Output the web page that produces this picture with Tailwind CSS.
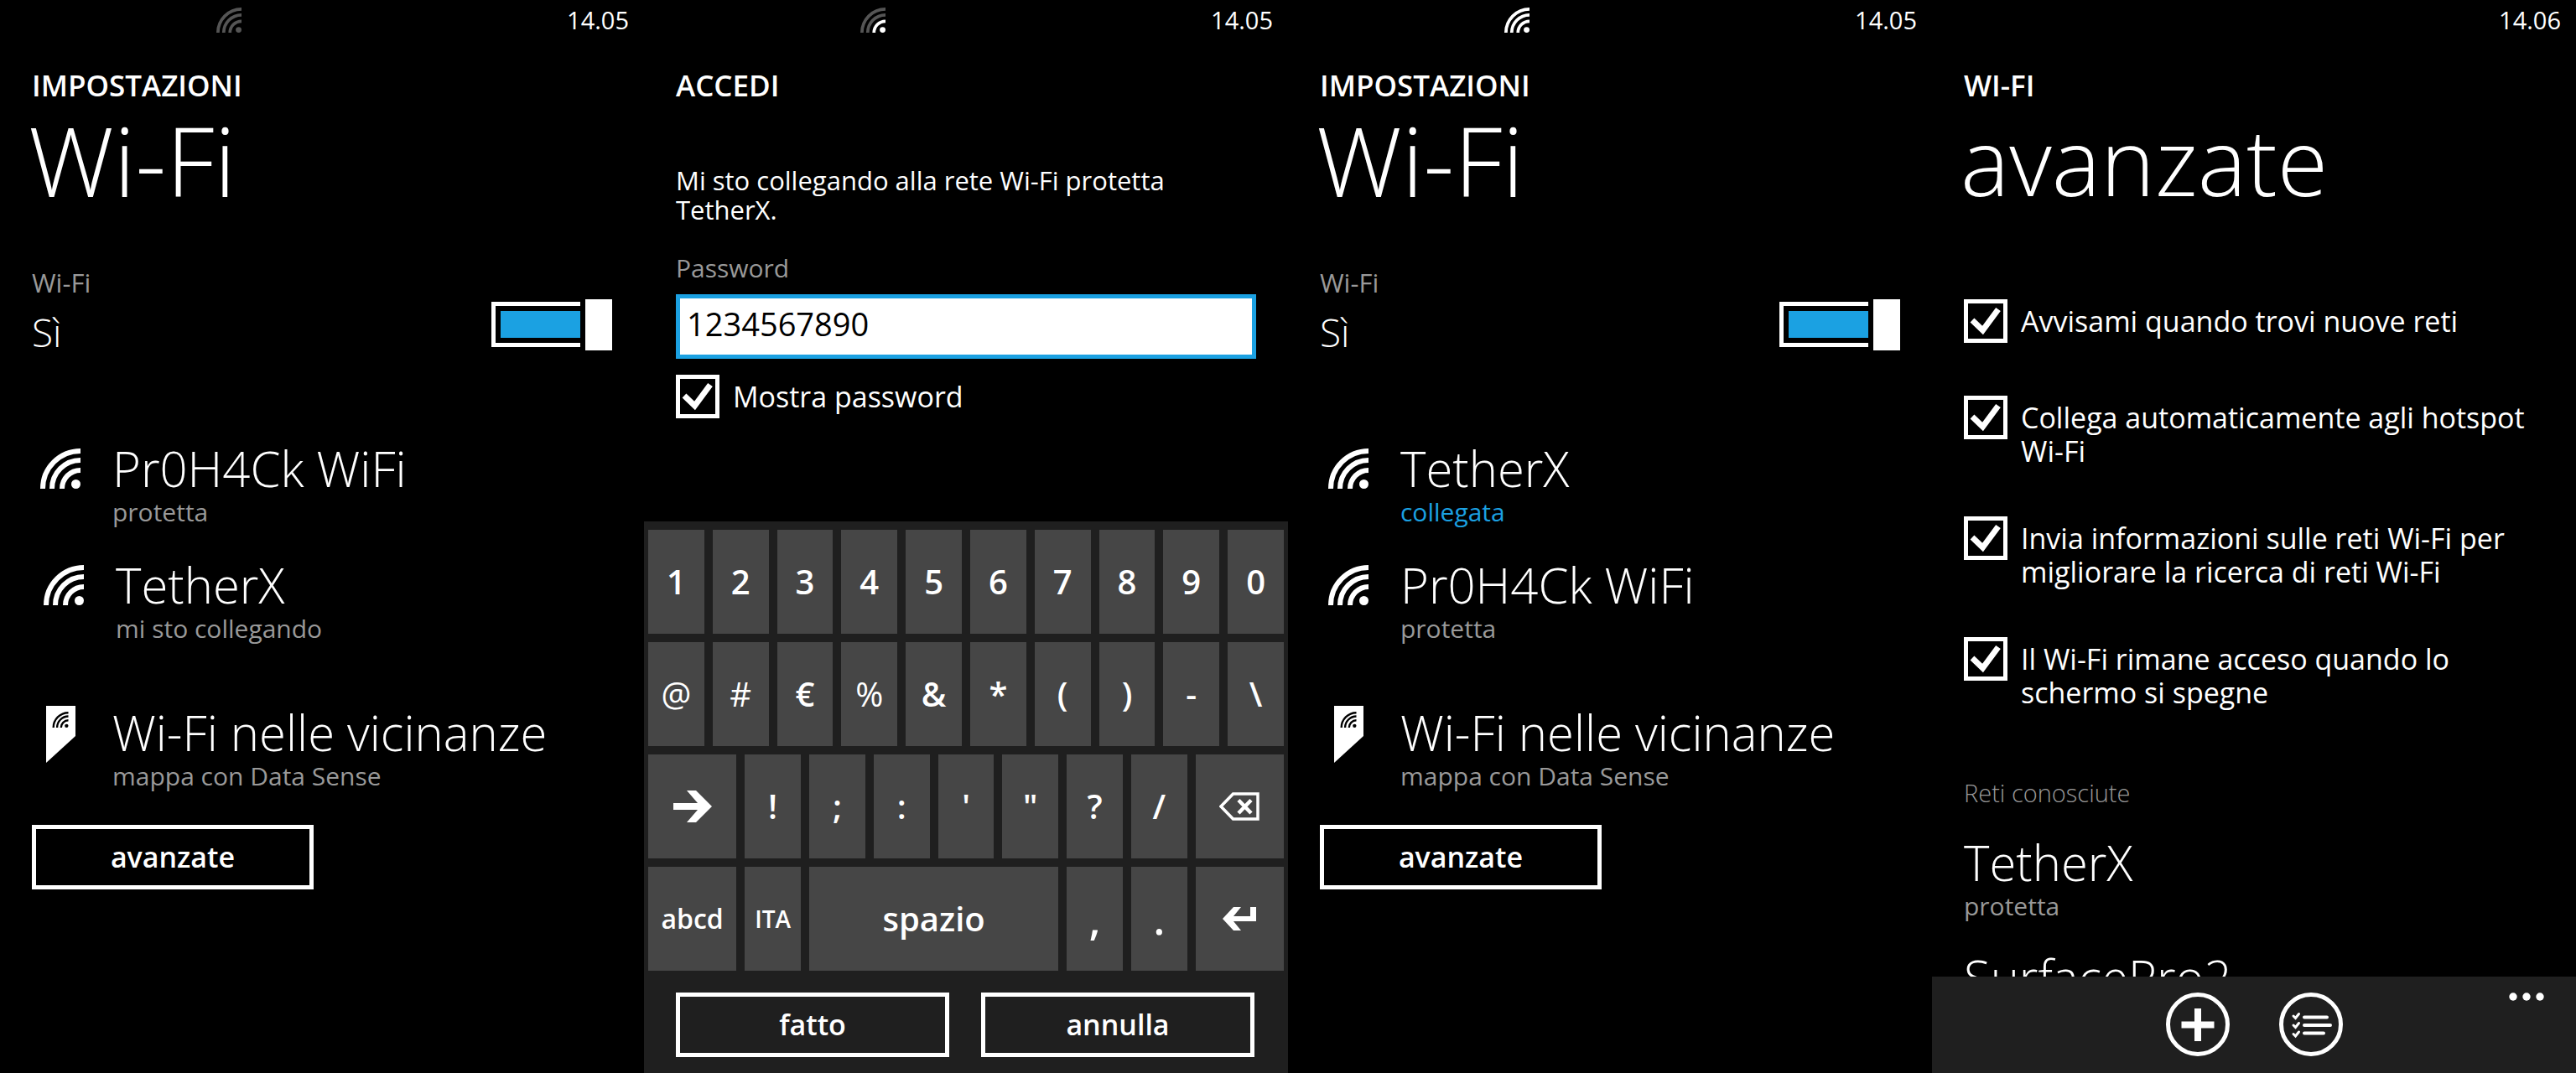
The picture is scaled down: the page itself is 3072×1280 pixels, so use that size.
<!DOCTYPE html>
<html lang="it">
<head>
  <meta charset="UTF-8">
  <meta name="viewport" content="width=device-width, initial-scale=1.0">
  <title>Impostazioni Wi-Fi</title>
  <script src="https://cdn.jsdelivr.net/npm/@tailwindcss/browser@4"></script>
</head>
<body class="bg-black text-white font-['Open_Sans','Noto_Sans',sans-serif]">
  <!-- Shared icons -->
  <svg class="hidden" aria-hidden="true">
    <symbol id="wifi" viewBox="0 0 48 48">
      <g fill="none" stroke="currentColor" stroke-width="6">
        <path d="M3 48A45 45 0 0 1 48 3" />
        <path d="M14 48A34 34 0 0 1 48 14" />
        <path d="M26 48A22 22 0 0 1 48 26" />
      </g>
      <circle cx="42.5" cy="42.5" r="5.5" fill="currentColor" />
    </symbol>
    <symbol id="pin" viewBox="0 0 35 68">
      <path d="M0 0H35V36L0 68Z" fill="#fff" />
      <use href="#wifi" x="7" y="7" width="20" height="19" color="#000" />
    </symbol>
    <symbol id="check" viewBox="0 0 52 52">
      <path d="M10 25L22.500 37L41 12" fill="none" stroke="#fff" stroke-width="7" />
    </symbol>
    <symbol id="switch" viewBox="0 0 144 61">
      <path d="M106 5.500H2.500V54.500H106" fill="none" stroke="#fff" stroke-width="5" />
      <path d="M11 14H106V46H11Z" fill="#1ba1e2" />
      <path d="M112 0H144V61H112Z" fill="#fff" />
    </symbol>
  </svg>

  <main class="grid grid-cols-4">
    <!-- Wi-Fi: connecting -->
    <section class="flex h-screen flex-col overflow-hidden">
      <div class="grid h-12 shrink-0 grid-cols-3 items-center pr-[18px] text-[29px]">
        <svg class="col-start-2 ml-2 size-[30px] text-[#555]"><use href="#wifi" /></svg>
        <time class="text-right">14.05</time>
      </div>
      <div class="px-[38px]">
        <h2 class="mt-[34px] text-[35px] leading-[40px] font-semibold">IMPOSTAZIONI</h2>
        <h1 class="mt-[9px] -ml-1 text-[114px] leading-[120px] font-light">Wi-Fi</h1>
        <label for="wifi-1" class="mt-[66px] block text-[31px] leading-[40px] text-[#999]">Wi-Fi</label>
        <div class="flex items-end justify-between">
          <span class="text-[46px] leading-[44px] font-light">Sì</span>
          <span class="grid">
            <input id="wifi-1" type="checkbox" role="switch" checked class="col-start-1 row-start-1 h-[61px] w-36 appearance-none">
            <svg class="pointer-events-none col-start-1 row-start-1 h-[61px] w-36"><use href="#switch" /></svg>
          </span>
        </div>
        <ul class="mt-[107px] flex flex-col gap-[35px]">
          <li class="flex">
            <div class="w-24 shrink-0 pt-[10px] pl-[10px]"><svg class="size-12"><use href="#wifi" /></svg></div>
            <div>
              <p class="text-[58px] leading-[68px] font-light">Pr0H4Ck WiFi</p>
              <p class="text-[30px] leading-[36px] text-[#999]">protetta</p>
            </div>
          </li>
          <li class="ml-1 flex">
            <div class="w-24 shrink-0 pt-[10px] pl-[10px]"><svg class="size-12"><use href="#wifi" /></svg></div>
            <div>
              <p class="text-[58px] leading-[68px] font-light">TetherX</p>
              <p class="text-[30px] leading-[36px] text-[#999]">mi sto collegando</p>
            </div>
          </li>
        </ul>
        <div class="mt-[72px] flex">
          <div class="w-24 shrink-0 pt-[2px] pl-[17px]"><svg class="h-[68px] w-[35px]"><use href="#pin" /></svg></div>
          <div>
            <p class="text-[58px] leading-[68px] font-light">Wi-Fi nelle vicinanze</p>
            <p class="text-[30px] leading-[36px] text-[#999]">mappa con Data Sense</p>
          </div>
        </div>
        <button class="mt-[40px] h-[77px] w-[336px] border-5 border-white text-[34px] font-semibold">avanzate</button>
      </div>
    </section>

    <!-- Password prompt with keyboard -->
    <section class="flex h-screen flex-col overflow-hidden">
      <div class="grid h-12 shrink-0 grid-cols-3 items-center pr-[18px] text-[29px]">
        <svg class="col-start-2 ml-2 size-[30px]" viewBox="0 0 48 48" fill="none" stroke="#555" stroke-width="6">
          <path d="M3 48A45 45 0 0 1 48 3" />
          <path d="M14 48A34 34 0 0 1 48 14" />
          <path d="M26 48A22 22 0 0 1 48 26" stroke="#fff" />
          <circle cx="42.5" cy="42.5" r="5.5" fill="#fff" stroke="none" />
        </svg>
        <time class="text-right">14.05</time>
      </div>
      <div class="px-[38px]">
        <h2 class="mt-[34px] text-[35px] leading-[40px] font-semibold">ACCEDI</h2>
        <p class="mt-[76px] pr-16 text-[31px] leading-[35px]">Mi sto collegando alla rete Wi-Fi protetta TetherX.</p>
        <label for="password" class="mt-[32px] block text-[30px] leading-[40px] text-[#999]">Password</label>
        <input id="password" type="text" value="1234567890" class="mt-[11px] block h-[77px] w-full border-5 border-[#1ba1e2] bg-white pb-2 pl-2 text-[38px] text-black">
        <div class="mt-[19px] flex items-center gap-4">
          <span class="grid shrink-0">
            <input id="show" type="checkbox" checked class="col-start-1 row-start-1 size-[52px] appearance-none border-5 border-white">
            <svg class="pointer-events-none col-start-1 row-start-1 size-[52px]"><use href="#check" /></svg>
          </span>
          <label for="show" class="text-[34px] leading-[40px]">Mostra password</label>
        </div>
      </div>
      <div class="mt-auto bg-[#1f1f1f] pt-[10px] pb-[19px]">
        <div class="grid auto-rows-[124px] grid-cols-20 gap-[10px] px-[5px] text-[40px] font-semibold">
          <button class="col-span-2 bg-[#464646]">1</button>
          <button class="col-span-2 bg-[#464646]">2</button>
          <button class="col-span-2 bg-[#464646]">3</button>
          <button class="col-span-2 bg-[#464646]">4</button>
          <button class="col-span-2 bg-[#464646]">5</button>
          <button class="col-span-2 bg-[#464646]">6</button>
          <button class="col-span-2 bg-[#464646]">7</button>
          <button class="col-span-2 bg-[#464646]">8</button>
          <button class="col-span-2 bg-[#464646]">9</button>
          <button class="col-span-2 bg-[#464646]">0</button>

          <button class="col-span-2 bg-[#464646] font-normal">@</button>
          <button class="col-span-2 bg-[#464646] font-normal">#</button>
          <button class="col-span-2 bg-[#464646]">€</button>
          <button class="col-span-2 bg-[#464646] font-normal">%</button>
          <button class="col-span-2 bg-[#464646]">&amp;</button>
          <button class="col-span-2 bg-[#464646]">*</button>
          <button class="col-span-2 bg-[#464646]">(</button>
          <button class="col-span-2 bg-[#464646]">)</button>
          <button class="col-span-2 bg-[#464646]">-</button>
          <button class="col-span-2 bg-[#464646]">\</button>

          <button class="col-span-3 flex items-center justify-center bg-[#464646]" aria-label="altri simboli">
            <svg class="h-[38px] w-[46px]" viewBox="0 0 46 38" fill="#fff"><path d="M0 15H29L16 0H27L46 19L27 38H16L29 23H0Z" /></svg>
          </button>
          <button class="col-span-2 bg-[#464646]">!</button>
          <button class="col-span-2 bg-[#464646]">;</button>
          <button class="col-span-2 bg-[#464646]">:</button>
          <button class="col-span-2 bg-[#464646]">'</button>
          <button class="col-span-2 bg-[#464646]">"</button>
          <button class="col-span-2 bg-[#464646]">?</button>
          <button class="col-span-2 bg-[#464646]">/</button>
          <button class="col-span-3 flex items-center justify-center bg-[#464646]" aria-label="cancella">
            <svg class="h-[34px] w-[48px]" viewBox="0 0 48 34" fill="none" stroke="#fff">
              <path d="M2 17L16.500 2H46V32H16.500Z" stroke-width="3.500" />
              <path d="M23 9.500L38 25M38 9.500L23 25" stroke-width="4.500" />
            </svg>
          </button>

          <button class="col-span-3 bg-[#464646] text-[32px]">abcd</button>
          <button class="col-span-2 bg-[#464646] text-[28px]">ITA</button>
          <button class="col-span-8 bg-[#464646]">spazio</button>
          <button class="col-span-2 bg-[#464646] text-[50px]">,</button>
          <button class="col-span-2 bg-[#464646] text-[50px]">.</button>
          <button class="col-span-3 flex items-center justify-center bg-[#464646]" aria-label="invio">
            <svg class="h-[28px] w-[40px]" viewBox="0 0 40 28" fill="#fff"><path d="M0 14L13 0H22L13 11H33V0H40V17H13L22 28H13Z" /></svg>
          </button>
        </div>
        <div class="mt-[26px] grid grid-cols-2 gap-[38px] pr-[40px] pl-[38px] text-[34px] font-semibold">
          <button class="h-[77px] border-5 border-white">fatto</button>
          <button class="h-[77px] border-5 border-white">annulla</button>
        </div>
      </div>
    </section>

    <!-- Wi-Fi: connected -->
    <section class="flex h-screen flex-col overflow-hidden">
      <div class="grid h-12 shrink-0 grid-cols-3 items-center pr-[18px] text-[29px]">
        <svg class="col-start-2 ml-2 size-[30px]"><use href="#wifi" /></svg>
        <time class="text-right">14.05</time>
      </div>
      <div class="px-[38px]">
        <h2 class="mt-[34px] text-[35px] leading-[40px] font-semibold">IMPOSTAZIONI</h2>
        <h1 class="mt-[9px] -ml-1 text-[114px] leading-[120px] font-light">Wi-Fi</h1>
        <label for="wifi-2" class="mt-[66px] block text-[31px] leading-[40px] text-[#999]">Wi-Fi</label>
        <div class="flex items-end justify-between">
          <span class="text-[46px] leading-[44px] font-light">Sì</span>
          <span class="grid">
            <input id="wifi-2" type="checkbox" role="switch" checked class="col-start-1 row-start-1 h-[61px] w-36 appearance-none">
            <svg class="pointer-events-none col-start-1 row-start-1 h-[61px] w-36"><use href="#switch" /></svg>
          </span>
        </div>
        <ul class="mt-[107px] flex flex-col gap-[35px]">
          <li class="flex">
            <div class="w-24 shrink-0 pt-[10px] pl-[10px]"><svg class="size-12"><use href="#wifi" /></svg></div>
            <div>
              <p class="text-[58px] leading-[68px] font-light">TetherX</p>
              <p class="text-[30px] leading-[36px] text-[#1ba1e2]">collegata</p>
            </div>
          </li>
          <li class="flex">
            <div class="w-24 shrink-0 pt-[10px] pl-[10px]"><svg class="size-12"><use href="#wifi" /></svg></div>
            <div>
              <p class="text-[58px] leading-[68px] font-light">Pr0H4Ck WiFi</p>
              <p class="text-[30px] leading-[36px] text-[#999]">protetta</p>
            </div>
          </li>
        </ul>
        <div class="mt-[72px] flex">
          <div class="w-24 shrink-0 pt-[2px] pl-[17px]"><svg class="h-[68px] w-[35px]"><use href="#pin" /></svg></div>
          <div>
            <p class="text-[58px] leading-[68px] font-light">Wi-Fi nelle vicinanze</p>
            <p class="text-[30px] leading-[36px] text-[#999]">mappa con Data Sense</p>
          </div>
        </div>
        <button class="mt-[40px] h-[77px] w-[336px] border-5 border-white text-[34px] font-semibold">avanzate</button>
      </div>
    </section>

    <!-- Advanced settings -->
    <section class="flex h-screen flex-col overflow-hidden">
      <div class="grid h-12 shrink-0 grid-cols-3 items-center pr-[18px] text-[29px]">
        <time class="col-start-3 text-right">14.06</time>
      </div>
      <div class="min-h-0 flex-1 overflow-hidden pr-4 pl-[38px]">
        <h2 class="mt-[34px] text-[35px] leading-[40px] font-semibold">WI-FI</h2>
        <h1 class="mt-[9px] -ml-1 text-[110px] leading-[120px] font-light">avanzate</h1>
        <div class="mt-[106px] flex flex-col gap-[58px] text-[34px] leading-[40px]">
          <div class="flex min-h-[57px] gap-4">
            <span class="grid shrink-0 self-start">
              <input id="notify" type="checkbox" checked class="col-start-1 row-start-1 size-[52px] appearance-none border-5 border-white">
              <svg class="pointer-events-none col-start-1 row-start-1 size-[52px]"><use href="#check" /></svg>
            </span>
            <label for="notify" class="pt-[6px]">Avvisami quando trovi nuove reti</label>
          </div>
          <div class="flex gap-4">
            <span class="grid shrink-0 self-start">
              <input id="hotspot" type="checkbox" checked class="col-start-1 row-start-1 size-[52px] appearance-none border-5 border-white">
              <svg class="pointer-events-none col-start-1 row-start-1 size-[52px]"><use href="#check" /></svg>
            </span>
            <label for="hotspot" class="pt-[6px]">Collega automaticamente agli hotspot Wi-Fi</label>
          </div>
          <div class="flex gap-4">
            <span class="grid shrink-0 self-start">
              <input id="send" type="checkbox" checked class="col-start-1 row-start-1 size-[52px] appearance-none border-5 border-white">
              <svg class="pointer-events-none col-start-1 row-start-1 size-[52px]"><use href="#check" /></svg>
            </span>
            <label for="send" class="pt-[6px]">Invia informazioni sulle reti Wi-Fi per migliorare la ricerca di reti Wi-Fi</label>
          </div>
          <div class="flex gap-4">
            <span class="grid shrink-0 self-start">
              <input id="keep-on" type="checkbox" checked class="col-start-1 row-start-1 size-[52px] appearance-none border-5 border-white">
              <svg class="pointer-events-none col-start-1 row-start-1 size-[52px]"><use href="#check" /></svg>
            </span>
            <label for="keep-on" class="pt-[6px]">Il Wi-Fi rimane acceso quando lo<br>schermo si spegne</label>
          </div>
        </div>
        <h3 class="mt-[80px] text-[29px] leading-[40px] font-light text-[#999]">Reti conosciute</h3>
        <ul class="mt-[29px] flex flex-col gap-[33px]">
          <li>
            <p class="text-[58px] leading-[68px] font-light">TetherX</p>
            <p class="text-[30px] leading-[36px] text-[#999]">protetta</p>
          </li>
          <li>
            <p class="text-[58px] leading-[68px] font-light">SurfacePro2</p>
          </li>
        </ul>
      </div>
      <div class="grid h-[115px] shrink-0 grid-cols-[1fr_auto_1fr] bg-[#1f1f1f] px-[38px] pt-[19px]">
        <div class="col-start-2 flex gap-[59px]">
          <button class="size-[76px]" aria-label="aggiungi">
            <svg viewBox="0 0 76 76" fill="none" stroke="#fff">
              <circle cx="38" cy="38" r="35.5" stroke-width="5" />
              <path d="M38 19V58M18.500 38.500H57.500" stroke-width="8" />
            </svg>
          </button>
          <button class="size-[76px]" aria-label="seleziona">
            <svg viewBox="0 0 76 76" fill="none" stroke="#fff" stroke-linecap="round">
              <circle cx="38" cy="38" r="35.5" stroke-width="5" />
              <path d="M30 29.500H57M30 39H61M30 48.500H53" stroke-width="4" />
              <path d="M17 28L19.500 30.500L23.500 25.500M17 39L19.500 41.500L23.500 36.500M17 49.500L19.500 52L23.500 47" stroke-width="3" />
            </svg>
          </button>
        </div>
        <button class="self-start justify-self-end" aria-label="altro">
          <svg class="h-[10px] w-[42px]" viewBox="0 0 42 10" fill="#fff"><circle cx="5" cy="5" r="4.7" /><circle cx="21" cy="5" r="4.7" /><circle cx="37" cy="5" r="4.7" /></svg>
        </button>
      </div>
    </section>
  </main>
</body>
</html>
